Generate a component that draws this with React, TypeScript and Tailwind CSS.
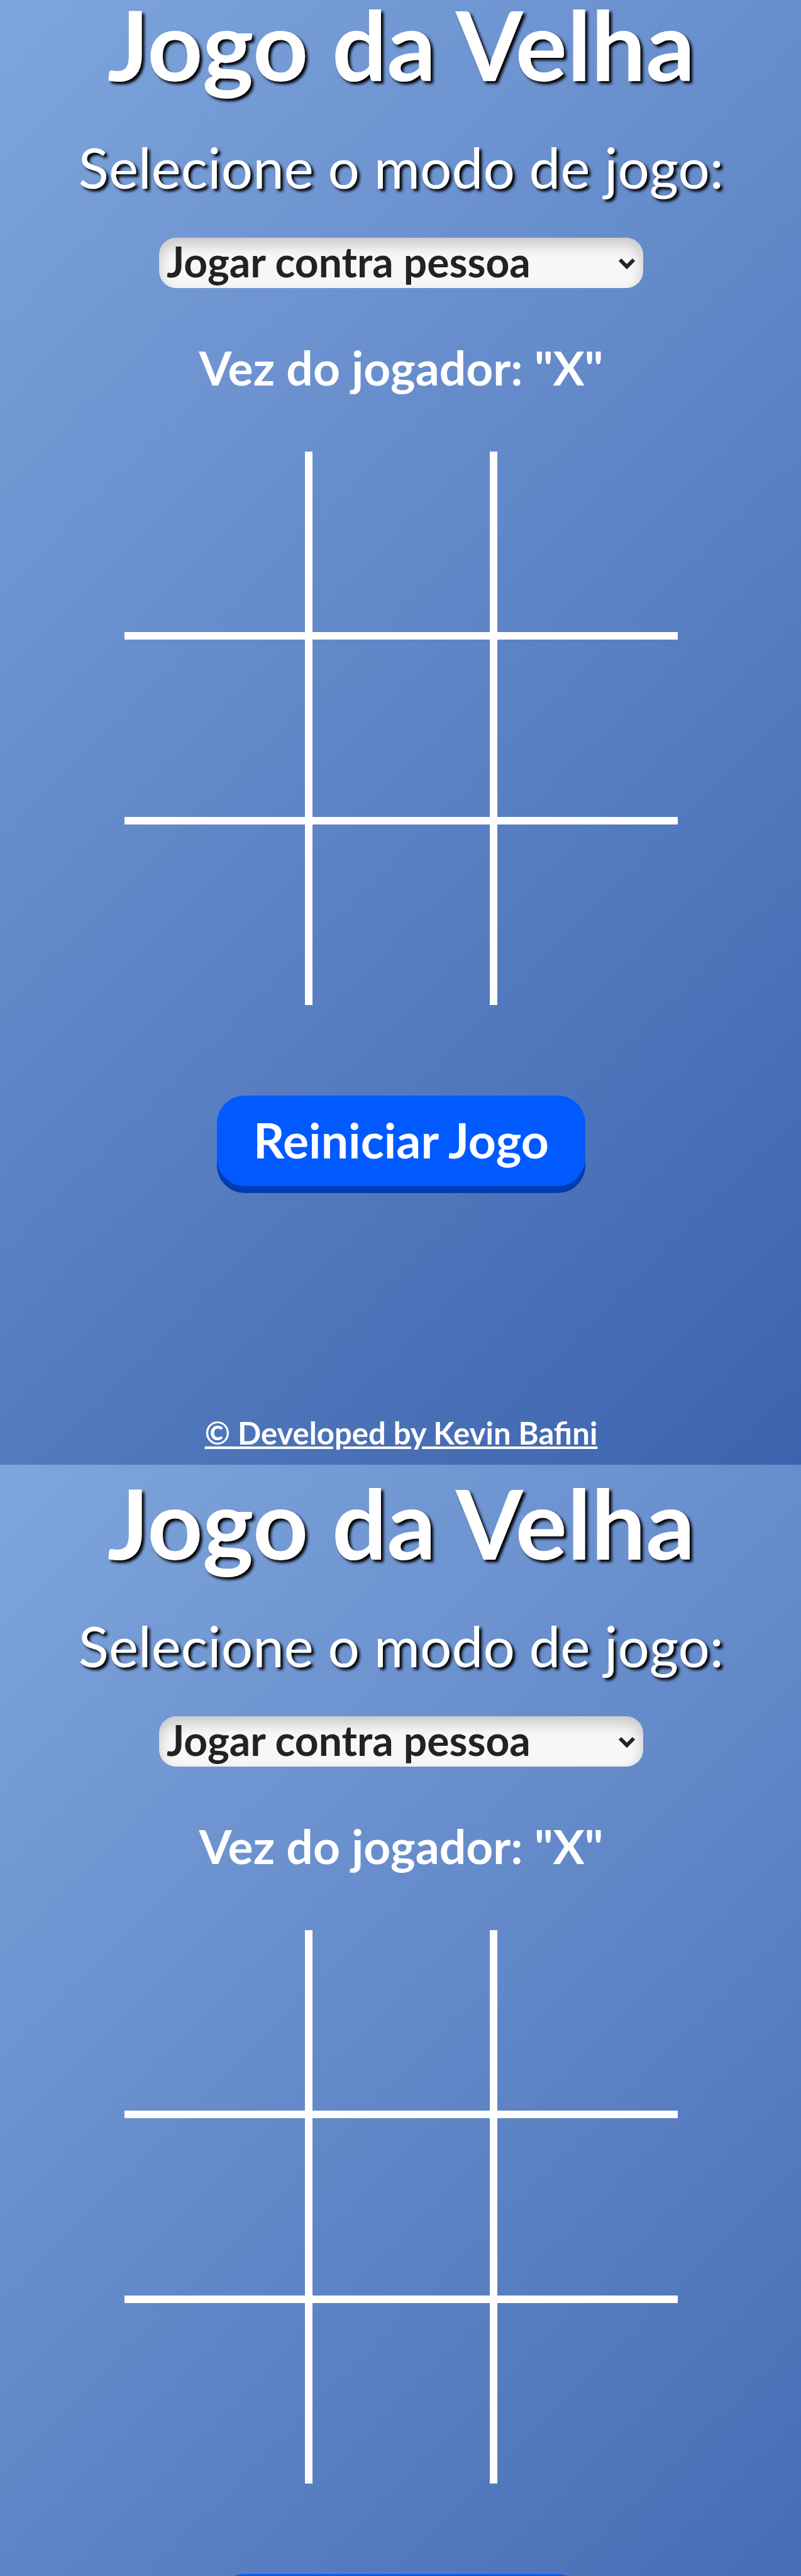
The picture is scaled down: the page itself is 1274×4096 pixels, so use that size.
const cells = Array.from({ length: 9 }, (_, i) => i);

function Game({ id }: { id: string }) {
  return (
    <section className="flex shrink-0 flex-col items-center pb-[41px] pl-0.5 text-white">
      <h1 className="text-[154px] leading-[140px] font-bold whitespace-nowrap [text-shadow:4px_4px_4px_#000]">
        Jogo da Velha
      </h1>
      <label
        htmlFor={id}
        className="mt-[76px] text-[89px] leading-[100px] whitespace-nowrap [text-shadow:4px_4px_4px_#000]"
      >
        Selecione o modo de jogo:
      </label>
      <div className="relative mt-[62px] w-[770px]">
        <select
          id={id}
          className="h-20 w-full appearance-none rounded-[27px] bg-[#f7f7f7] pb-1 pl-3 text-[66px] leading-[76px] font-bold text-[#222] shadow-[inset_0_11px_22px_rgba(0,0,0,0.2)]"
        >
          <option>Jogar contra pessoa</option>
        </select>
        <svg viewBox="0 0 28 18" className="pointer-events-none absolute top-8 right-3 h-[18px] w-7" fill="none" stroke="#222" strokeWidth="6">
          <path d="M3 3l11 11L25 3" />
        </svg>
      </div>
      <p className="mt-[76px] text-[75px] leading-[100px] font-bold whitespace-nowrap">Vez do jogador: "X"</p>
      <div className="mt-[84px] grid w-[880px] grid-cols-3">
        {cells.map((i) => (
          <button
            key={i}
            type="button"
            aria-label={`Casa ${i + 1}`}
            className="aspect-square border-white not-nth-[3n]:border-r-[6px] not-nth-[3n+1]:border-l-[6px] nth-[n+4]:border-t-[6px] nth-[-n+6]:border-b-[6px]"
          />
        ))}
      </div>
      <button
        type="button"
        className="mt-[144px] h-36 w-[586px] rounded-[44px] bg-[#005aff] pb-1 text-[77px] leading-[100px] font-bold whitespace-nowrap shadow-[0_11px_0_#003cb0]"
      >
        Reiniciar Jogo
      </button>
      <a href="#" className="mt-[360px] text-[49px] leading-[64px] font-bold whitespace-nowrap underline">
        © Developed by Kevin Bafini
      </a>
    </section>
  );
}

export default function App() {
  return (
    <main className="flex h-screen flex-col overflow-hidden bg-[linear-gradient(135deg,#7fa5dd,#3c63ad)] bg-size-[100%_2329px] font-[Lato,sans-serif]">
      <Game id="modo-1" />
      <Game id="modo-2" />
    </main>
  );
}
